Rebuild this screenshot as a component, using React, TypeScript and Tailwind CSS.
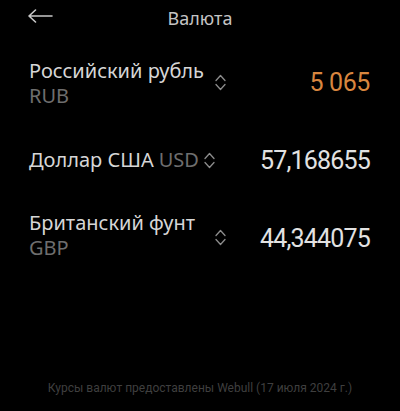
const rows = [
  { name: "Российский рубль", code: "RUB", value: "5 065", active: true, inline: false },
  { name: "Доллар США", code: "USD", value: "57,168655", active: false, inline: true },
  { name: "Британский фунт", code: "GBP", value: "44,344075", active: false, inline: false },
];

function Sorter() {
  return (
    <svg width="11" height="17" viewBox="0 0 11 17" fill="none" stroke="#8c8c8c" strokeWidth="1.3" strokeLinecap="round" strokeLinejoin="round">
      <path d="M1 6.5 5.5 1.5 10 6.5M1 10.5l4.5 5 4.5-5" />
    </svg>
  );
}

export default function App() {
  return (
    <div
      className="relative h-[411px] w-[400px] overflow-hidden bg-black text-[#d6d6d6]"
      style={{ fontFamily: "'Noto Sans', Roboto, sans-serif" }}
    >
      <header className="relative flex h-[34px] items-center justify-center">
        <button className="absolute left-[28px] top-[9px] text-[#c8c8c8]">
          <svg width="25" height="14" viewBox="0 0 25 14" fill="none" stroke="currentColor" strokeWidth="1.6" strokeLinecap="round" strokeLinejoin="round">
            <path d="M1 7h23M7.5 1 1 7l6.5 6" />
          </svg>
        </button>
        <h1 className="mt-[1px] text-[18px] leading-[24px] text-[#c4c4c4]">Валюта</h1>
      </header>

      <div className="flex flex-col pl-[29px] pr-[30px] pt-[24px]">
        {rows.map((r, i) => (
          <div
            key={r.code}
            className={
              i === 0
                ? "flex h-[50px] items-center"
                : i === 1
                ? "mt-[39px] flex h-[25px] items-center"
                : "mt-[38px] flex h-[50px] items-center"
            }
          >
            {r.inline ? (
              <div className="flex items-center text-[20px] leading-[25px]">
                <span>{r.name}</span>
                <span className="ml-[5px] text-[#6e6e6e]">{r.code}</span>
                <div className="ml-[5px] mt-[2px]">
                  <Sorter />
                </div>
              </div>
            ) : (
              <>
                <div className="w-[186px] text-[20px] leading-[25px]">
                  <div className="whitespace-nowrap">{r.name}</div>
                  <div className="text-[#6e6e6e]">{r.code}</div>
                </div>
                <div className={i === 2 ? "mt-[4px]" : "mt-[-2px]"}>
                  <Sorter />
                </div>
              </>
            )}
            <div
              className={
                r.active
                  ? "ml-auto text-[25px] tracking-[-0.4px] text-[#d9863f]"
                  : i === 2
                  ? "ml-auto mt-[8px] text-[25px] tracking-[-0.8px] text-[#e2e2e2]"
                  : "ml-auto mt-[3px] text-[25px] tracking-[-0.8px] text-[#e2e2e2]"
              }
              style={{ fontFamily: "Roboto, sans-serif" }}
            >
              {r.value}
            </div>
          </div>
        ))}
      </div>

      <div
        className="absolute bottom-[14px] left-0 right-0 text-center text-[12px] text-[#3f3f3f]"
        style={{ fontFamily: "Roboto, sans-serif" }}
      >
        Курсы валют предоставлены Webull (17 июля 2024 г.)
      </div>
    </div>
  );
}
